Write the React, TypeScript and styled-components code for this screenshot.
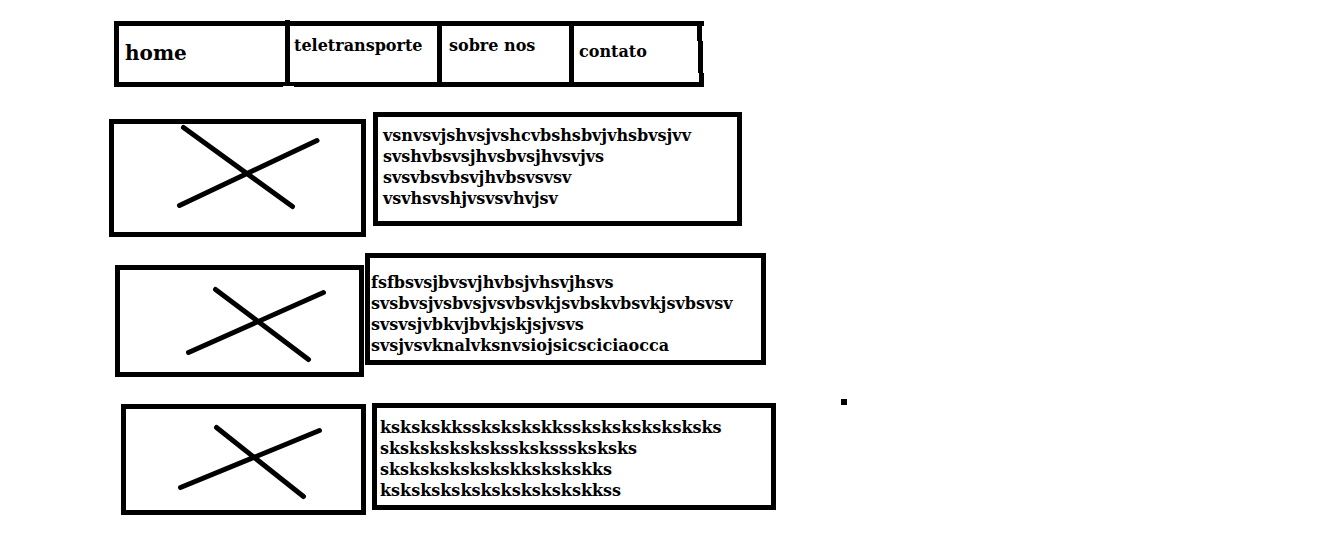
import React from 'react';
import styled, { createGlobalStyle } from 'styled-components';

const GlobalStyle = createGlobalStyle`
  * { box-sizing: border-box; }
  body {
    margin: 0;
    background: #fff;
    color: #000;
    font: 900 16px/21px "DejaVu Serif", serif;
  }
`;

const Page = styled.div`
  padding: 21px 16px 16px 109px;
`;

const Nav = styled.nav`
  display: flex;
  width: fit-content;
  max-width: 100%;
  margin-left: 5px;
  border: solid #000;
  border-width: 5px 0 5px 5px;
`;

const NavList = styled.ul`
  display: flex;
  margin: 0;
  padding: 0;
  list-style: none;
`;

const NavItem = styled.li<{ $width: number; $top: number; $left: number }>`
  position: relative;
  flex: 0 1 ${(p) => p.$width}px;
  width: ${(p) => p.$width}px;
  min-height: 56px;
  padding: ${(p) => p.$top}px 0 0 ${(p) => p.$left}px;

  & + & {
    border-left: 5px solid #000;
  }

  /* the first divider overshoots the top line and nicks the bottom one */
  &:nth-child(2)::before {
    content: '';
    position: absolute;
    left: -5px;
    top: -6px;
    width: 5px;
    height: 1px;
    background: #000;
  }

  &:nth-child(2)::after {
    content: '';
    position: absolute;
    left: -7px;
    bottom: -5px;
    width: 11px;
    height: 1px;
    background: #fff;
  }
`;

const NavLink = styled.a<{ $large?: boolean }>`
  display: block;
  color: inherit;
  text-decoration: none;
  white-space: nowrap;
  font-size: ${(p) => (p.$large ? 20 : 16)}px;
  line-height: ${(p) => (p.$large ? 24 : 21)}px;
`;

const Edge = styled.svg`
  flex: none;
  display: block;
  width: 7px;
  height: 56px;
`;

const Row = styled.section<{ $gap: number; $indent: number; $space: number }>`
  display: flex;
  align-items: flex-start;
  gap: ${(p) => p.$space}px;
  margin-top: ${(p) => p.$gap}px;
  padding-left: ${(p) => p.$indent}px;
`;

const Picture = styled.figure<{ $width: number; $drop: number }>`
  flex: 0 1 ${(p) => p.$width}px;
  margin: ${(p) => p.$drop}px 0 0;
  border: 5px solid #000;
`;

const Cross = styled.svg`
  display: block;
  width: 100%;
  height: auto;
  fill: none;
  stroke: #000;
  stroke-width: 5px;
  stroke-linecap: round;
`;

const TextBox = styled.p<{ $width: number; $drop: number; $pad: string }>`
  flex: 0 1 ${(p) => p.$width}px;
  margin: ${(p) => p.$drop}px 0 0;
  padding: ${(p) => p.$pad};
  border: 5px solid #000;
  white-space: pre;
`;

const Dot = styled.span`
  flex: none;
  width: 6px;
  height: 6px;
  margin-left: 59px;
  background: #000;
`;

const links = [
  { label: 'home', width: 166, top: 15, left: 6, large: true },
  { label: 'teletransporte', width: 152, top: 9, left: 4 },
  { label: 'sobre nos', width: 132, top: 9, left: 7 },
  { label: 'contato', width: 128, top: 15, left: 5 },
];

const rows = [
  {
    gap: 25, indent: 0, space: 7,
    picture: { width: 257, drop: 7, box: '0 0 247 108', path: 'M69.5 3.5L178.5 82.5M65.5 81.5L203 16.5' },
    text: { width: 369, drop: 0, pad: '8px 0 12px 5px' },
    lines: ['vsnvsvjshvsjvshcvbshsbvjvhsbvsjvv', 'svshvbsvsjhvsbvsjhvsvjvs', 'svsvbsvbsvjhvbsvsvsv', 'vsvhsvshjvsvsvhvjsv'],
  },
  {
    gap: 16, indent: 6, space: 1,
    picture: { width: 249, drop: 12, box: '0 0 239 102', path: 'M95.5 19.5L188.5 89.5M68.5 82.5L203.5 22.5' },
    text: { width: 401, drop: 0, pad: '14px 0 4px 1px' },
    lines: ['fsfbsvsjbvsvjhvbsjvhsvjhsvs', 'svsbvsjvsbvsjvsvbsvkjsvbskvbsvkjsvbsvsv', 'svsvsjvbkvjbvkjskjsjvsvs', 'svsjvsvknalvksnvsiojsicsciciaocca'],
  },
  {
    gap: 22, indent: 12, space: 6, dot: true,
    picture: { width: 245, drop: 5, box: '0 0 235 101', path: 'M90.5 18.5L177.5 87.5M54.5 78.5L193.5 21.5' },
    text: { width: 404, drop: 4, pad: '9px 0 4px 3px' },
    lines: ['kskskskksskskskskkssksksksksksksks', 'skskskskskskssksksssksksks', 'skskskskskskskkskskskks', 'kskskskskskskskskskskkss'],
  },
];

export default function App() {
  return (
    <>
      <GlobalStyle />
      <Page>
        <Nav>
          <NavList>
            {links.map((l) => (
              <NavItem key={l.label} $width={l.width} $top={l.top} $left={l.left}>
                <NavLink href="#" $large={l.large}>{l.label}</NavLink>
              </NavItem>
            ))}
          </NavList>
          <Edge viewBox="0 0 7 56" aria-hidden="true">
            <path d="M0 0H5V15H6V47H7V56H2V47H1V15H0Z" />
          </Edge>
        </Nav>
        <main>
          {rows.map((r) => (
            <Row key={r.lines[0]} $gap={r.gap} $indent={r.indent} $space={r.space}>
              <Picture $width={r.picture.width} $drop={r.picture.drop}>
                <Cross viewBox={r.picture.box} aria-hidden="true">
                  <path d={r.picture.path} />
                </Cross>
              </Picture>
              <TextBox $width={r.text.width} $drop={r.text.drop} $pad={r.text.pad}>
                {r.lines.join('\n')}
              </TextBox>
              {r.dot && <Dot />}
            </Row>
          ))}
        </main>
      </Page>
    </>
  );
}
